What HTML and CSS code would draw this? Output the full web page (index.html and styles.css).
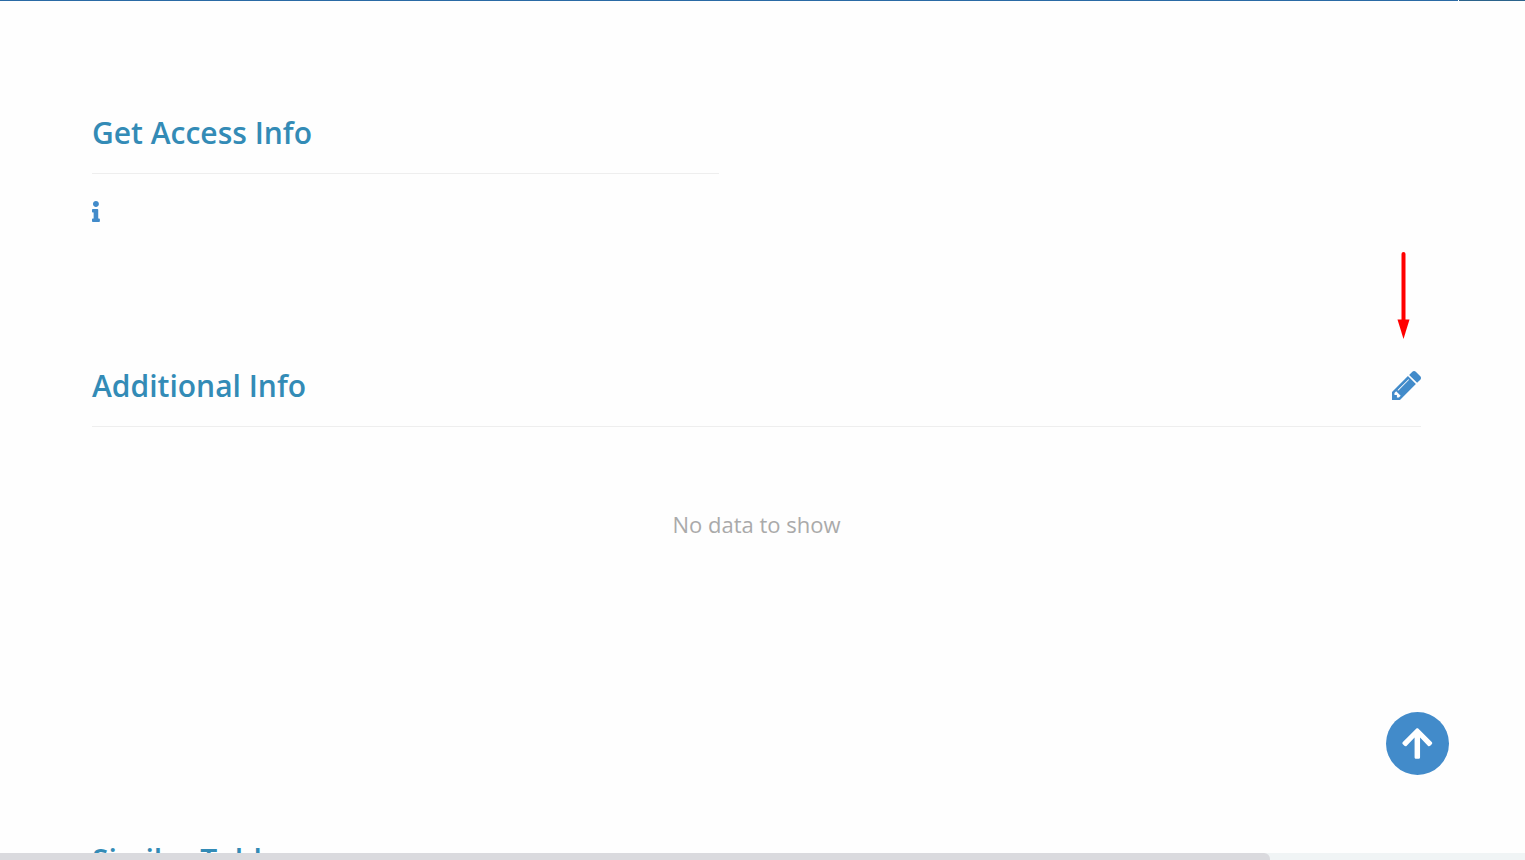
FILE: index.html
```
<!DOCTYPE html>
<html lang="en">
<head>
    <meta charset="UTF-8">
    <meta name="viewport" content="width=device-width, initial-scale=1.0">
    <title>Table Details</title>
    <link rel="stylesheet" href="styles.css">
</head>
<body>

<div class="topbar">
    <div class="topbar-main"></div>
    <div class="topbar-side"></div>
</div>

<main class="content">
    <section class="section section-access">
        <div class="section-header">
            <h2>Get Access Info</h2>
        </div>
        <svg class="info-icon" viewBox="0 0 192 512" role="img" aria-label="Info">
            <path d="M20 424.229h20V279.771H20c-11.046 0-20-8.954-20-20V212c0-11.046 8.954-20 20-20h112c11.046 0 20 8.954 20 20v212.229h20c11.046 0 20 8.954 20 20V492c0 11.046-8.954 20-20 20H20c-11.046 0-20-8.954-20-20v-47.771c0-11.046 8.954-20 20-20zM96 0C56.235 0 24 32.235 24 72s32.235 72 72 72 72-32.235 72-72S135.764 0 96 0z"/>
        </svg>
    </section>

    <section class="section section-additional">
        <div class="section-header">
            <h2>Additional Info</h2>
            <button class="edit-button" type="button" aria-label="Edit additional info">
                <svg viewBox="0 149 1515 1515">
                    <path d="M363 1536l91-91-235-235-91 91v107h128v128h107zM886 608q0-22-22-22-10 0-17 7l-542 542q-7 7-7 17 0 22 22 22 10 0 17-7l542-542q7-7 7-17zM832 416l416 416-832 832H0v-416zM1515 512q0 53-37 90l-166 166-416-416 166-165q36-38 90-38 53 0 91 38l235 234q37 39 37 91z" fill-rule="evenodd"/>
                </svg>
            </button>
            <!-- pointer above the edit button -->
            <svg class="pointer" viewBox="0 0 14 88">
                <path d="M6.500 3V72" fill="none" stroke="#f00" stroke-width="4" stroke-linecap="round"/>
                <path d="M.5 68.500H12.500L6.500 88z" fill="#f00"/>
            </svg>
        </div>
        <p class="empty">No data to show</p>
    </section>

    <section class="section">
        <div class="section-header">
            <h2>Similar Tables</h2>
        </div>
    </section>
</main>

<button class="to-top" type="button" aria-label="Back to top">
    <svg viewBox="0 0 448 512">
        <path d="M34.900 289.500l-22.200-22.200c-9.400-9.400-9.400-24.600 0-33.900L207 39c9.400-9.400 24.600-9.400 33.900 0l194.300 194.300c9.400 9.400 9.400 24.600 0 33.900L413 289.400c-9.500 9.500-25 9.300-34.300-.4L264 168.600V456c0 13.300-10.700 24-24 24h-32c-13.300 0-24-10.700-24-24V168.600L69.200 289.100c-9.300 9.800-24.800 10-34.300.4z"/>
    </svg>
</button>

<div class="scrollbar">
    <div class="scrollbar-thumb"></div>
</div>

</body>
</html>
```
FILE: styles.css
```
body {
    display: flex;
    flex-direction: column;
    height: 100vh;
    margin: 0;
    overflow: hidden;
    background-color: #fefefe;
    font-family: "Open Sans", sans-serif;
}

button {
    padding: 0;
    border: 0;
    cursor: pointer;
}

.topbar {
    display: flex;
    flex: none;
    gap: 1px;
    height: 1px;
}

.topbar-main {
    flex: 1;
    background-color: #2a6aa5;
}

.topbar-side {
    width: 66px;
    background-color: #2b638b;
}

.content {
    flex: 1;
    min-height: 0;
    overflow: hidden;
    padding: 112px 104px 0 92px;
}

.section-header {
    position: relative;
    display: flex;
    align-items: center;
    justify-content: space-between;
    padding-bottom: 20px;
    border-bottom: 1px solid #eee;
}

.section-header h2 {
    margin: 0;
    color: #338bb6;
    font-size: 30px;
    font-weight: 600;
    line-height: 40px;
}

.section-access {
    width: 627px;
    max-width: 100%;
    height: 253px;
}

.section-additional {
    height: 474px;
}

.info-icon {
    display: block;
    height: 21px;
    margin-top: 27px;
    fill: #428bca;
}

.edit-button {
    display: flex;
    align-items: flex-start;
    width: 29px;
    height: 32px;
    background: none;
}

.edit-button svg {
    width: 29px;
    height: 29px;
    margin-top: 1px;
    fill: #428bca;
}

.pointer {
    position: absolute;
    right: 10px;
    bottom: 87px;
    width: 14px;
    height: 88px;
}

.empty {
    margin: 80px 0 0;
    color: #aaa;
    font-size: 22px;
    font-weight: 400;
    line-height: 34px;
    text-align: center;
}

.to-top {
    position: fixed;
    right: 76px;
    bottom: 85px;
    display: flex;
    align-items: center;
    justify-content: center;
    width: 63px;
    height: 63px;
    border-radius: 50%;
    background-color: #428bca;
}

.to-top svg {
    height: 35px;
    fill: #fff;
}

.scrollbar {
    flex: none;
    height: 7px;
    background-color: #f0f4f5;
}

.scrollbar-thumb {
    width: 1270px;
    max-width: 100%;
    height: 100%;
    border-radius: 0 6px 0 0;
    background-color: #dadade;
}
```
